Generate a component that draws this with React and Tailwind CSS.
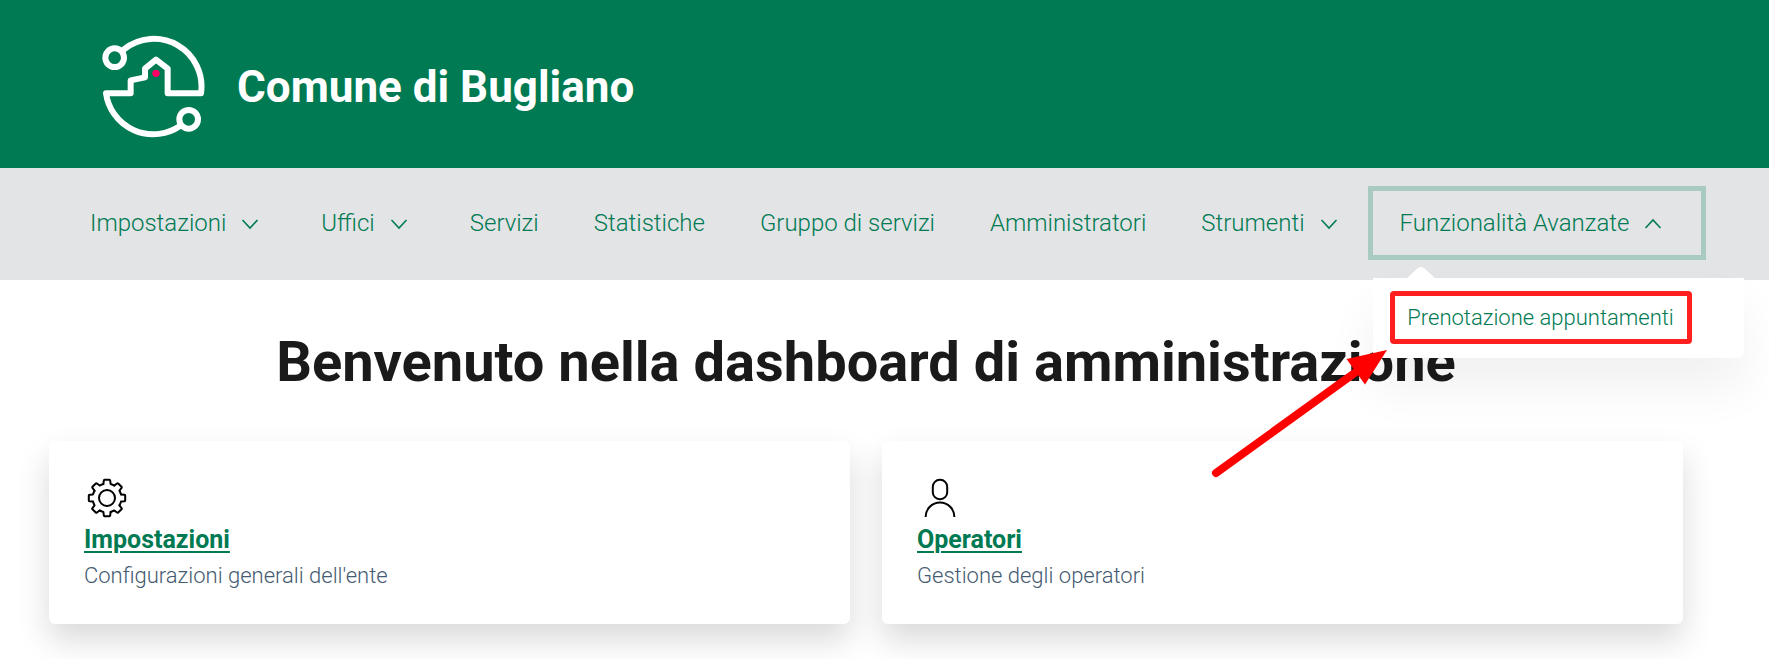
import { useState } from 'react';
import clsx from 'clsx';

const navItems = [
  { label: 'Impostazioni', dropdown: true },
  { label: 'Uffici', dropdown: true },
  { label: 'Servizi' },
  { label: 'Statistiche' },
  { label: 'Gruppo di servizi' },
  { label: 'Amministratori' },
  { label: 'Strumenti', dropdown: true },
  { label: 'Funzionalità Avanzate', dropdown: true, links: ['Prenotazione appuntamenti'] },
];

const cards = [
  { title: 'Impostazioni', text: "Configurazioni generali dell'ente", Icon: GearIcon },
  { title: 'Operatori', text: 'Gestione degli operatori', Icon: UserIcon },
];

function Logo() {
  return (
    <svg viewBox="21 19 309 312" className="h-[104px] w-[103px] shrink-0" fill="none" aria-hidden="true">
      <g stroke="#fff" strokeWidth="18" strokeLinejoin="round" strokeLinecap="round">
        <path d="M87 62A143 143 0 0 1 318 194H218V120L183 93L150 120V146L107 155V194H33A143 143 0 0 0 255 292" />
        <circle cx="59" cy="87" r="28" />
        <circle cx="281" cy="272" r="28" />
      </g>
      <circle cx="183" cy="134" r="11" fill="#ff0066" />
    </svg>
  );
}

function Chevron({ open }) {
  return (
    <svg viewBox="0 0 32 32" className="h-8 w-8" fill="none" stroke="currentColor" strokeWidth="1.6" aria-hidden="true">
      <path d={open ? 'M8.5 21L16 13L23.5 21' : 'M8.5 13L16 21L23.5 13'} />
    </svg>
  );
}

function GearIcon() {
  return (
    <svg viewBox="0 0 46 46" className="h-[46px] w-[46px]" fill="none" stroke="#000" strokeWidth="2" strokeLinecap="round" strokeLinejoin="round" aria-hidden="true">
      {[0, 45, 90, 135, 180, 225, 270, 315].map((angle) => (
        <path key={angle} transform={`rotate(${angle} 23 23)`} d="M19.4 9L19.8 5.6Q19.9 4.8 20.6 4.8H25.4Q26.1 4.8 26.2 5.6L26.6 9Q27.6 9.2 30.3 10.5" />
      ))}
      <circle cx="23" cy="23" r="8" />
    </svg>
  );
}

function UserIcon() {
  return (
    <svg viewBox="0 0 46 46" className="h-[46px] w-[46px]" fill="none" stroke="#000" strokeWidth="2" aria-hidden="true">
      <rect x="15.8" y="4.8" width="14.4" height="19.4" rx="7" />
      <path d="M8.6 42A14.4 14.4 0 0 1 37.4 42" />
    </svg>
  );
}

function Arrow() {
  return (
    <svg viewBox="0 0 180 132" className="pointer-events-none absolute top-[70px] -left-[162px] h-[132px] w-[180px]" aria-hidden="true">
      <path d="M5 125L145 24" stroke="#f00" strokeWidth="8" strokeLinecap="round" />
      <path d="M176 2L135.5 11L154 36.5Z" fill="#f00" />
    </svg>
  );
}

function Menu({ links }) {
  return (
    <div className="absolute top-[87px] left-0 z-10 w-[371px] rounded-b-md bg-white pt-[13px] pb-[14px] pl-[17px] shadow-[0_30px_50px_0_rgba(0,0,0,0.06)]">
      <svg viewBox="0 0 30 12" className="absolute -top-[11px] left-[33px] h-3 w-[30px]" aria-hidden="true">
        <path d="M0 12L12 1Q15 -1 18 1L30 12Z" fill="#fff" />
      </svg>
      {links.map((link) => (
        <a key={link} href="#" className="flex h-[53px] w-[302px] items-center justify-center rounded border-[5px] border-[#ff1f1f] text-[22px] whitespace-nowrap">
          {link}
        </a>
      ))}
      <Arrow />
    </div>
  );
}

function App() {
  const [openMenu, setOpenMenu] = useState('Funzionalità Avanzate');

  return (
    <div className="min-h-screen overflow-x-hidden bg-white font-['Roboto','Liberation_Sans',sans-serif] font-light">
      {/* Header */}
      <header className="flex items-center gap-8 bg-[#007a52] pt-[35px] pb-[29px] pl-[102px] text-white">
        <Logo />
        <div className="text-[44px] leading-none font-bold">Comune di Bugliano</div>
      </header>

      {/* Navigation */}
      <nav className="bg-[#e3e4e6] pt-[23px] pb-[25px] pl-[63px] text-[#007a52]">
        <ul className="flex items-center gap-px">
          {navItems.map((item) => {
            const open = openMenu === item.label;
            return (
              <li key={item.label} className="relative">
                {item.dropdown ? (
                  <button
                    type="button"
                    aria-expanded={open}
                    onClick={() => setOpenMenu(open ? null : item.label)}
                    className={clsx(
                      'flex h-16 items-center gap-2 pl-[27px] text-[24px] whitespace-nowrap',
                      open ? 'pr-8 outline-5 outline-[#a9cac0]' : 'pr-[27px]'
                    )}
                  >
                    {item.label}
                    <Chevron open={open} />
                  </button>
                ) : (
                  <a href="#" className="flex h-16 items-center px-[27px] text-[24px] whitespace-nowrap">
                    {item.label}
                  </a>
                )}
                {open && item.links && <Menu links={item.links} />}
              </li>
            );
          })}
        </ul>
      </nav>

      {/* Dashboard */}
      <main className="pt-12 pr-[86px] pb-[35px] pl-[49px]">
        <h1 className="text-center text-[56px] leading-[68px] font-bold text-[#1a1a1a]">
          Benvenuto nella dashboard di amministrazione
        </h1>
        <div className="mt-[45px] grid grid-cols-2 gap-8">
          {cards.map(({ title, text, Icon }) => (
            <section key={title} className="rounded-md bg-white px-[35px] pt-[34px] pb-[31px] shadow-[0_16px_32px_0_rgba(0,0,0,0.15)]">
              <Icon />
              <h2 className="text-[25px] leading-[38px] font-bold">
                <a href="#" className="text-[#007a52] underline decoration-2 underline-offset-3">{title}</a>
              </h2>
              <p className="text-[22px] leading-[34px] text-[#455b71]">{text}</p>
            </section>
          ))}
        </div>
      </main>
    </div>
  );
}

export default App;
